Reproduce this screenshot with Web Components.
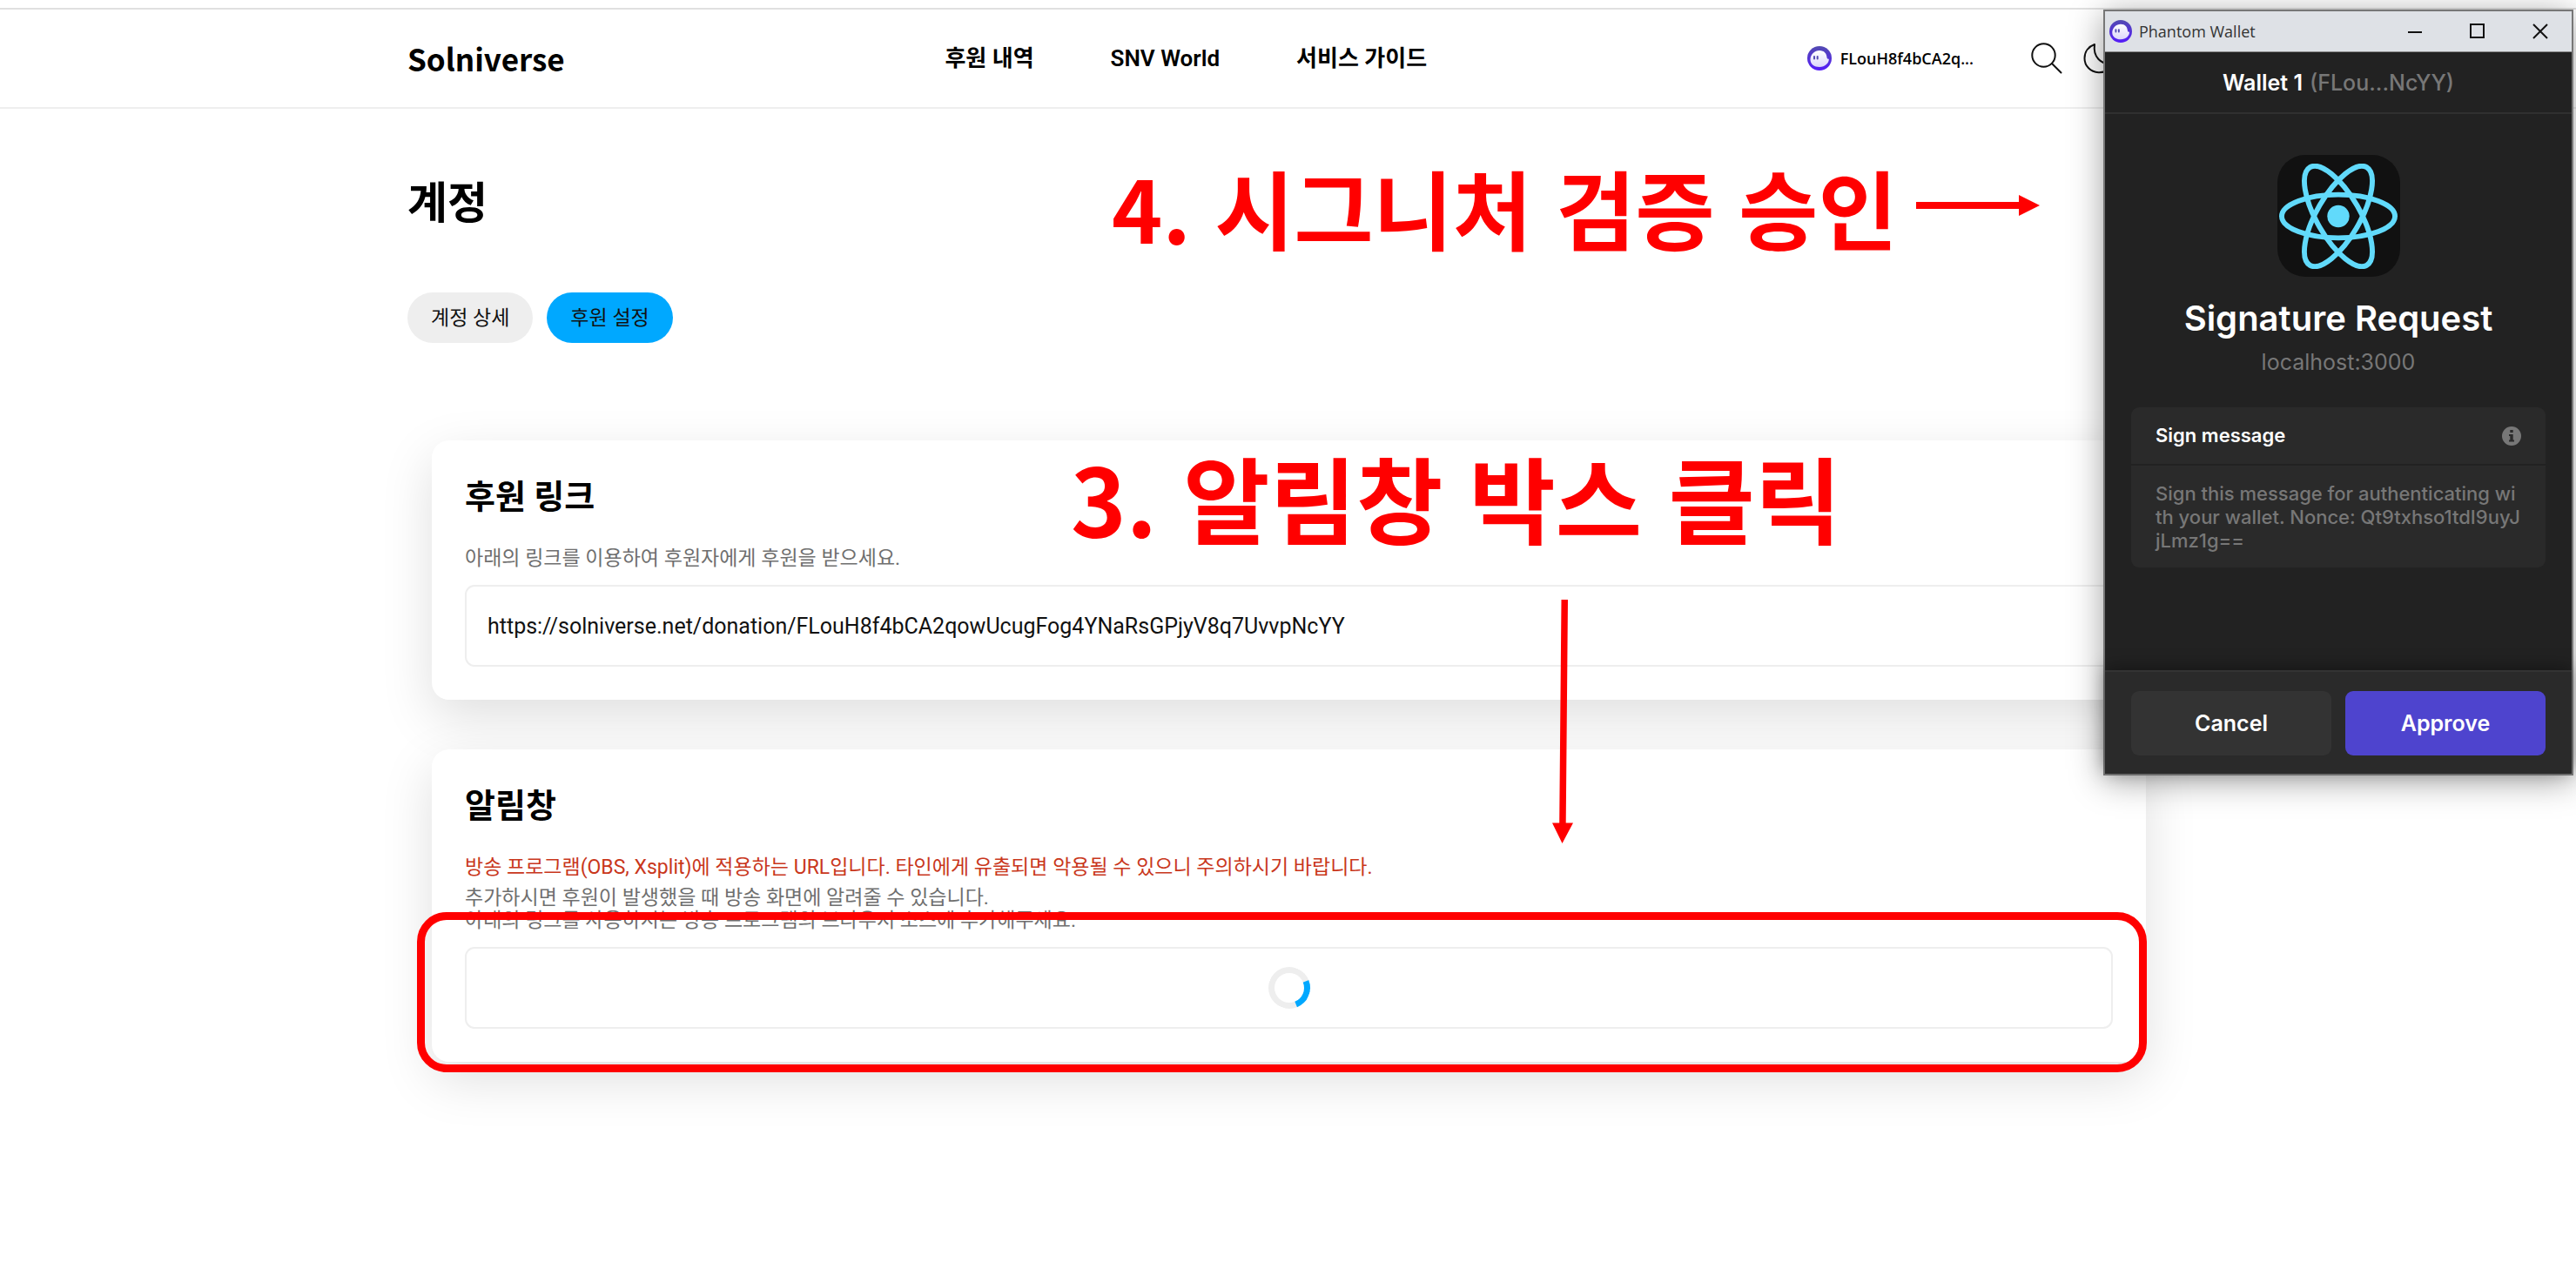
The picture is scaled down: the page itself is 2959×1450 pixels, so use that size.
<!DOCTYPE html>
<html lang="ko">
<head>
<meta charset="utf-8">
<title>Solniverse</title>
<style>
  body {
    margin: 0;
    min-height: 100vh;
    background: #fff;
    color: #000;
    font-family: Roboto, "Noto Sans CJK KR", sans-serif;
    font-size: 23px;
    line-height: 26px;
    overflow-x: hidden;
  }
</style>
</head>
<body>
<solniverse-app></solniverse-app>

<script>
function define(name, html) {
  const template = document.createElement('template');
  template.innerHTML = '<style>*{box-sizing:border-box}</style>' + html;
  customElements.define(name, class extends HTMLElement {
    constructor() {
      super();
      this.attachShadow({ mode: 'open' }).append(template.content.cloneNode(true));
    }
  });
}

define('phantom-icon', `
  <style>
    :host { display: block; width: 28px; height: 28px; flex: none; }
    svg { display: block; width: 100%; height: 100%; }
  </style>
  <svg viewBox="0 0 28 28" aria-hidden="true">
    <defs>
      <linearGradient id="ring" x1="0" y1="0" x2="0" y2="1"><stop offset="0" stop-color="#534bb1"/><stop offset="1" stop-color="#551bf9"/></linearGradient>
      <linearGradient id="ghost" x1="0" y1="0" x2="0" y2="1"><stop offset="0" stop-color="#fff"/><stop offset="1" stop-color="#dcd6fb"/></linearGradient>
    </defs>
    <circle cx="14" cy="14" r="14" fill="url(#ring)"/>
    <path d="M3.500 15.500C3.500 9.500 8.600 5 14 5C19.500 5 22.300 8.500 22.600 13.500Q22.800 15 24.800 14.800C25 19.500 20.500 24 14 24C8 24 3.500 20.500 3.500 15.500Z" fill="url(#ghost)"/>
    <rect x="7" y="11" width="2" height="4.500" rx="1" fill="#534bb1"/>
    <rect x="10.700" y="11" width="2" height="4.500" rx="1" fill="#534bb1"/>
  </svg>`);

define('site-header', `
  <style>
    :host { display: block; border-top: 2px solid #e0e0e0; border-bottom: 2px solid #eee; margin-top: 9px; }
    header { display: flex; align-items: center; justify-content: space-between; max-width: 2023px; height: 112px; margin: 0 auto; }
    a { color: inherit; text-decoration: none; }
    .brand { font-family: "Noto Sans CJK KR", sans-serif; font-size: 35px; line-height: 48px; font-weight: 700; }
    nav { display: flex; gap: 88px; font-size: 26px; line-height: 36px; font-weight: 600; }
    .tools { display: flex; align-items: center; }
    button { display: flex; align-items: center; padding: 0; border: 0; background: none; font: inherit; color: inherit; }
    .account { gap: 10px; margin-right: 66px; font-family: "Open Sans", sans-serif; font-size: 18px; line-height: 28px; font-weight: 600; }
    .icons { display: flex; gap: 24px; margin-right: 62px; }
    svg { display: block; fill: none; stroke: #111; stroke-width: 2; stroke-linecap: round; stroke-linejoin: round; }
  </style>
  <header>
    <a class="brand" href="#">Solniverse</a>
    <nav><a href="#">후원 내역</a><a href="#">SNV World</a><a href="#">서비스 가이드</a></nav>
    <div class="tools">
      <button class="account"><phantom-icon></phantom-icon><span>FLouH8f4bCA2q...</span></button>
      <div class="icons">
        <button aria-label="Search"><svg width="36" height="36" viewBox="0 0 36 36"><circle cx="14.500" cy="14.500" r="13.200"/><path d="M24 24L34.500 34.500"/></svg></button>
        <button aria-label="Dark mode"><svg width="36" height="36" viewBox="0 0 36 36"><path d="M13 2C11 16 20 26 34 24C30 31.500 24 34.500 17.500 34.200C8.500 33.800 1.500 27 1.500 18C1.500 10.500 6 4.500 13 2Z"/></svg></button>
      </div>
    </div>
  </header>`);

define('tab-pill', `
  <style>
    :host { display: block; }
    button { display: block; height: 58px; padding: 2px 27px 0; border: 0; border-radius: 29px; background: #eee; color: #111; font: inherit; }
    :host([active]) button { background: #00a8ff; }
  </style>
  <button><slot></slot></button>`);

define('setting-card', `
  <style>
    :host { display: block; position: relative; padding: 41px 38px 38px; border-radius: 20px; background: #fff; box-shadow: 0 20px 60px rgba(0,0,0,.13); }
    h2 { margin: 0 0 34px; font-size: 38px; line-height: 48px; font-weight: 700; }
    .text { margin-bottom: 17px; color: #6f6f6f; }
  </style>
  <h2><slot name="title"></slot></h2>
  <div class="text"><slot name="text"></slot></div>
  <slot></slot>`);

define('link-field', `
  <style>
    :host { display: block; }
    input { display: block; width: 100%; height: 94px; padding: 0 24px; border: 2px solid #eee; border-radius: 11px; background: #fff; color: #111; font: inherit; font-size: 25px; outline: 0; }
  </style>
  <input readonly aria-label="후원 링크" value="https://solniverse.net/donation/FLouH8f4bCA2qowUcugFog4YNaRsGPjyV8q7UvvpNcYY">`);

define('loading-field', `
  <style>
    :host { display: block; }
    button { display: flex; align-items: center; justify-content: center; width: 100%; height: 94px; border: 2px solid #eee; border-radius: 11px; background: #fff; }
    .spin { width: 48px; height: 48px; border: 7px solid #eee; border-right-color: #00a8ff; border-radius: 50%; transform: rotate(23deg); }
  </style>
  <button aria-label="알림창"><span class="spin"></span></button>`);

define('click-highlight', `
  <style>
    :host { display: block; position: absolute; inset: 187px -1px -12px -17px; border: 9px solid #f00; border-radius: 34px; pointer-events: none; }
  </style>`);

define('step-note', `
  <style>
    :host { display: block; position: absolute; z-index: 1; color: #f00; font-family: "Noto Sans CJK KR", sans-serif; font-weight: 700; line-height: 120px; white-space: nowrap; pointer-events: none; }
  </style>
  <slot></slot>`);

define('note-arrow', `
  <style>
    :host { display: block; position: absolute; z-index: 1; pointer-events: none; }
    svg { display: none; fill: #f00; }
    :host([to="right"]) .right, :host([to="down"]) .down { display: block; }
  </style>
  <svg class="right" width="142" height="24" viewBox="0 0 142 24"><path d="M0 8H118V0L142 12L118 24V16H0Z"/></svg>
  <svg class="down" width="24" height="280" viewBox="0 0 24 280"><path d="M10.500 0H18L15.700 256.500H24L11.500 280L0 256.500H8.200Z"/></svg>`);

define('react-logo', `
  <style>
    :host { display: flex; align-items: center; justify-content: center; width: 141px; height: 140px; border-radius: 32px; background: #111; }
  </style>
  <svg width="136" height="121" viewBox="-11.500 -10.230 23 20.460" aria-hidden="true">
    <circle r="2.150" fill="#61dafb"/>
    <g fill="none" stroke="#61dafb"><ellipse rx="11" ry="4.200"/><ellipse rx="11" ry="4.200" transform="rotate(60)"/><ellipse rx="11" ry="4.200" transform="rotate(120)"/></g>
  </svg>`);

define('wallet-window', `
  <style>
    :host { display: flex; flex-direction: column; position: absolute; z-index: 2; top: 11px; right: 3px; width: 540px; height: 880px; border: 2px solid #777; background: #222; color: #fff; font-family: Inter, sans-serif; box-shadow: 0 6px 36px rgba(0,0,0,.38); }
    .bar { display: flex; align-items: center; height: 47px; padding-left: 5px; background: #dee1e6; color: #333; font: 18px/26px "Open Sans", sans-serif; border-bottom: 1px solid #888; }
    .bar phantom-icon { width: 26px; height: 26px; margin-right: 8px; }
    .bar span { flex: 1; }
    .bar button { width: 72px; height: 46px; padding: 0; border: 0; background: none; display: flex; align-items: center; justify-content: center; }
    .bar svg { fill: none; stroke: #111; stroke-width: 2; }
    .account { display: flex; align-items: center; justify-content: center; gap: 8px; height: 71px; border-bottom: 2px solid #303030; font-size: 25px; line-height: 32px; font-weight: 600; }
    .account span, .origin { color: #777; }
    .account span { font-weight: 500; }
    main { flex: 1; display: flex; flex-direction: column; align-items: center; padding: 47px 30px 0; }
    h1 { margin: 22px 0 0; font-size: 40px; line-height: 52px; font-weight: 600; }
    .origin { margin: 8px 0 36px; font-size: 25px; line-height: 32px; }
    section { align-self: stretch; border-radius: 9px; background: #2a2a2a; font-size: 22px; line-height: 27px; }
    h2 { display: flex; align-items: center; justify-content: space-between; margin: 0; height: 67px; padding: 0 28px; border-bottom: 2px solid #222; font: inherit; font-weight: 600; }
    p { margin: 0; padding: 19px 28px 17px; color: #777; font-weight: 500; word-break: break-all; }
    footer { display: flex; gap: 16px; height: 119px; padding: 22px 30px 0; border-top: 2px solid #333; background: #2a2a2a; box-shadow: 0 -4px 18px rgba(0,0,0,.35); }
    footer button { flex: 1; height: 74px; border: 0; border-radius: 9px; background: #333; color: #fff; font: inherit; font-size: 25px; font-weight: 600; }
    footer .ok { background: #4e44ce; }
  </style>
  <div class="bar">
    <phantom-icon></phantom-icon><span>Phantom Wallet</span>
    <button aria-label="Minimize"><svg width="18" height="18"><path d="M1 10H17"/></svg></button>
    <button aria-label="Maximize"><svg width="18" height="18"><rect x="1" y="1" width="15" height="15"/></svg></button>
    <button aria-label="Close"><svg width="18" height="18"><path d="M1 1L17 17M17 1L1 17"/></svg></button>
  </div>
  <div class="account">Wallet 1 <span>(FLou...NcYY)</span></div>
  <main>
    <react-logo></react-logo>
    <h1>Signature Request</h1>
    <div class="origin">localhost:3000</div>
    <section>
      <h2>Sign message
        <svg width="22" height="22" viewBox="0 0 22 22" aria-hidden="true"><circle cx="11" cy="11" r="11" fill="#777"/><path d="M9.300 4H12.700V7H9.300ZM8 9H12.700V15.500H14V17.500H8V15.500H9.300V11H8Z" fill="#2a2a2a"/></svg>
      </h2>
      <p>Sign this message for authenticating with your wallet. Nonce: Qt9txhso1tdI9uyJjLmz1g==</p>
    </section>
  </main>
  <footer><button>Cancel</button><button class="ok">Approve</button></footer>`);

define('solniverse-app', `
  <style>
    :host { display: block; position: relative; }
    :host::before { content: ""; display: table; }
    main { max-width: 2023px; margin: 0 auto; padding: 73px 0 120px; }
    h1 { margin: 0 0 66px; font-size: 50px; line-height: 72px; font-weight: 700; }
    .tabs { display: flex; gap: 16px; margin-bottom: 112px; }
    .cards { display: flex; flex-direction: column; gap: 57px; padding: 0 26px 0 28px; }
    p { margin: 0; }
    .warn { margin-bottom: 9px; color: #c9371c; }
    .verify { left: 1277px; top: 177px; font-size: 99px; }
    .click { left: 1230px; top: 510px; font-size: 108px; }
    [to="right"] { left: 2201px; top: 224px; }
    [to="down"] { left: 1783px; top: 689px; }
  </style>
  <site-header></site-header>
  <main>
    <h1>계정</h1>
    <div class="tabs"><tab-pill>계정 상세</tab-pill><tab-pill active>후원 설정</tab-pill></div>
    <div class="cards">
      <setting-card>
        <span slot="title">후원 링크</span>
        <p slot="text">아래의 링크를 이용하여 후원자에게 후원을 받으세요.</p>
        <link-field></link-field>
      </setting-card>
      <setting-card>
        <span slot="title">알림창</span>
        <p slot="text" class="warn">방송 프로그램(OBS, Xsplit)에 적용하는 URL입니다. 타인에게 유출되면 악용될 수 있으니 주의하시기 바랍니다.</p>
        <p slot="text">추가하시면 후원이 발생했을 때 방송 화면에 알려줄 수 있습니다.<br>아래의 링크를 사용하시는 방송 프로그램의 브라우저 소스에 추가해주세요.</p>
        <loading-field></loading-field>
        <click-highlight></click-highlight>
      </setting-card>
    </div>
  </main>
  <step-note class="verify">4. 시그니처 검증 승인</step-note>
  <note-arrow to="right"></note-arrow>
  <step-note class="click">3. 알림창 박스 클릭</step-note>
  <note-arrow to="down"></note-arrow>
  <wallet-window></wallet-window>`);
</script>
</body>
</html>
